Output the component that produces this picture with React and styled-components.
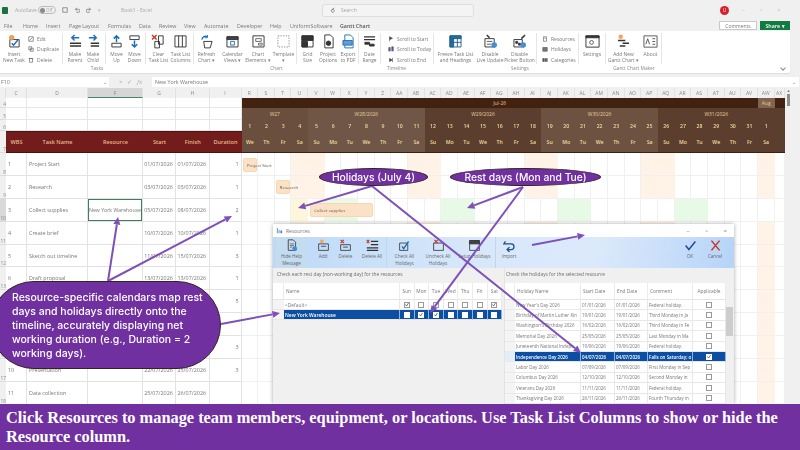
import React from "react";
import styled, { createGlobalStyle } from "styled-components";

const Global = createGlobalStyle`
  html, body { margin: 0; padding: 0; background: #f0f0f0; }
  * { box-sizing: border-box; }
`;

const Page = styled.div`
  position: relative;
  width: 800px;
  height: 450px;
  overflow: hidden;
  display: flex;
  flex-direction: column;
  background: #f0f0f0;
  font-family: "Open Sans", "Liberation Sans", sans-serif;
  color: #555;
`;
const Soft = styled.div`
  flex: 1;
  min-height: 0;
  display: flex;
  flex-direction: column;
  filter: blur(0.4px);
`;

/* ---------- title bar ---------- */
const TitleBar = styled.div`
  height: 20px;
  display: flex;
  align-items: center;
  padding: 0 0 0 2px;
  font-size: 5px;
  color: #a8a8a8;
`;
const Logo = styled.div`
  width: 6px;
  height: 7px;
  border-radius: 1px;
  background: #1d6f42;
  margin-right: 7px;
`;
const TitleText = styled.span`
  width: ${(p) => p.$w}px;
  flex: none;
  white-space: nowrap;
`;
const Toggle = styled.div`
  width: 18px;
  height: 8px;
  margin: 0 6px 0 2px;
  border: 1px solid #bbb;
  border-radius: 4px;
  display: flex;
  align-items: center;
  gap: 1px;
  padding: 0 1px;
  font-size: 4.4px;
  &::before { content: ""; width: 5px; height: 5px; border-radius: 50%; background: #8a8a8a; }
`;
const QuickIcons = styled.div`
  display: flex;
  gap: 6px;
  align-items: center;
  width: 59px;
  color: #bbb;
`;
const SearchBox = styled.div`
  width: 152px;
  height: 13px;
  margin-left: 168px;
  border: 1px solid #dedede;
  border-radius: 2px;
  background: #f4f4f4;
  display: flex;
  align-items: center;
  gap: 6px;
  padding-left: 6px;
`;
const Avatar = styled.div`
  width: 9px;
  height: 9px;
  margin-left: 246px;
  border-radius: 50%;
  background: #d9202a;
  color: #fff;
  font-size: 4.5px;
  display: flex;
  align-items: center;
  justify-content: center;
`;
const WinControls = styled.div`
  display: flex;
  gap: 15px;
  margin-left: 13px;
  font-size: 6px;
  color: #bfbfbf;
  line-height: 1;
`;

/* ---------- tabs ---------- */
const TabBar = styled.div`
  height: 11px;
  display: flex;
  align-items: center;
  padding-left: 4px;
  font-size: 5.3px;
  color: #777;
`;
const Tab = styled.span`
  width: ${(p) => p.$w}px;
  flex: none;
  white-space: nowrap;
  ${(p) => p.$active && "font-weight: 600; color: #555;"}
`;
const TabRight = styled.div`
  margin-left: auto;
  margin-right: 10px;
  display: flex;
  gap: 3px;
`;
const CommentBtn = styled.div`
  width: 38px;
  height: 9px;
  border: 1px solid #c9c9c9;
  background: #fff;
  display: flex;
  align-items: center;
  justify-content: center;
  font-size: 5px;
`;
const ShareBtn = styled.div`
  width: 30px;
  height: 9px;
  background: #107c41;
  color: #fff;
  display: flex;
  align-items: center;
  justify-content: center;
  font-size: 5.3px;
  font-weight: 600;
`;

/* ---------- ribbon ---------- */
const Ribbon = styled.div`
  height: 42px;
  width: 790px;
  background: #fff;
  border-radius: 0 2px 2px 0;
  box-shadow: 0 1px 1px #ddd;
  margin-bottom: 4px;
  display: flex;
  position: relative;
`;
const Group = styled.div`
  width: ${(p) => p.$w}px;
  display: flex;
  flex-direction: column;
`;
const GroupBody = styled.div`
  height: 33px;
  display: flex;
`;
const GroupLabel = styled.div`
  height: 9px;
  text-align: center;
  font-size: 4.8px;
  line-height: 8px;
  color: #888;
`;
const Section = styled.div`
  width: ${(p) => p.$w}px;
  display: flex;
  justify-content: center;
  border-right: 1px solid #e6e6e6;
  margin-top: 2px;
`;
const Big = styled.div`
  width: ${(p) => p.$w}px;
  flex: none;
  display: flex;
  flex-direction: column;
  align-items: center;
  padding-top: 1px;
  font-size: 4.9px;
  line-height: 6.6px;
  text-align: center;
  white-space: nowrap;
  color: #777;
  svg { display: block; margin-bottom: 2px; }
`;
const SmallCol = styled.div`
  width: ${(p) => p.$w}px;
  display: flex;
  flex-direction: column;
  padding: 1px 0 0 ${(p) => p.$pad}px;
  gap: 1.5px;
`;
const Small = styled.div`
  height: 9.5px;
  display: flex;
  align-items: center;
  gap: 3px;
  font-size: 5px;
  white-space: nowrap;
  color: #777;
`;
const RibbonChevron = styled.div`
  position: absolute;
  right: 5px;
  bottom: 3px;
  width: 4px;
  height: 4px;
  transform: rotate(45deg);
  border: solid #888;
  border-width: 0 1px 1px 0;
`;

/* ---------- formula bar ---------- */
const FormulaBar = styled.div`
  height: 10px;
  margin-bottom: 1px;
  display: flex;
  font-size: 5.3px;
  color: #777;
`;
const NameBox = styled.div`
  width: 109px;
  background: #fff;
  display: flex;
  align-items: center;
  justify-content: space-between;
  padding: 0 2px 0 1px;
`;
const FormulaTools = styled.div`
  width: 43px;
  display: flex;
  align-items: center;
  justify-content: center;
  gap: 5px;
  color: #aaa;
  font-size: 6px;
`;
const FormulaInput = styled.div`
  flex: 1;
  margin-right: 1px;
  background: #fff;
  display: flex;
  align-items: center;
  justify-content: space-between;
  padding: 0 3px;
`;

/* ---------- sheet ---------- */
const SheetWrap = styled.div`
  flex: 1;
  min-height: 0;
  display: flex;
  overflow: hidden;
  background: #fff;
`;
const Grid = styled.div`
  width: 785px;
  display: grid;
  grid-template-columns: 6px 21px 61px 55px 33px 33.5px 32px repeat(32, 16.667px) 10px;
  grid-template-rows: 10px 10px 12px 11px 22px repeat(11, 22.9px);
  font-size: 5.4px;
  color: #777;
`;
const ColHead = styled.div`
  background: ${(p) => (p.$sel ? "#d6d6d6" : "#f0f0f0")};
  ${(p) => p.$sel && "border-bottom: 1px solid #3f8a63;"}
  display: flex;
  align-items: center;
  justify-content: center;
  font-size: 5px;
  color: #888;
  border-right: 1px solid #e2e2e2;
  overflow: hidden;
`;
const RowHead = styled.div`
  background: ${(p) => (p.$sel ? "#d9d9d9" : "#f0f0f0")};
  border-bottom: 1px solid #dcdcdc;
  display: flex;
  align-items: flex-end;
  justify-content: flex-end;
  overflow: hidden;
  font-size: 4.8px;
  color: #888;
  white-space: nowrap;
`;
const Blank = styled.div`
  border-right: 1px solid #e6e6e6;
  border-bottom: 1px solid #e6e6e6;
`;
const HeaderCell = styled.div`
  background: #721c1c;
  color: #e4b98a;
  font-weight: 600;
  font-size: 5.6px;
  display: flex;
  align-items: center;
  justify-content: center;
  border-top: 1px solid #4c1212;
  border-bottom: 1px solid #4c1212;
`;
const Month = styled.div`
  grid-column: span ${(p) => p.$span};
  background: ${(p) => (p.$light ? "#806450" : "#41210f")};
  color: #e8c794;
  font-size: 5px;
  display: flex;
  align-items: center;
  justify-content: center;
`;
const Week = styled.div`
  grid-column: span ${(p) => p.$span};
  background: ${(p) => p.$bg};
  color: #e8cf9e;
  font-size: 5px;
  display: flex;
  align-items: center;
  justify-content: center;
`;
const DayCell = styled.div`
  background: ${(p) => p.$bg};
  color: #eedca0;
  font-size: 5.2px;
  font-weight: 600;
  display: flex;
  align-items: center;
  justify-content: center;
  ${(p) => p.$low && "border-bottom: 1px solid #3a2113;"}
`;
const Cell = styled.div`
  position: relative;
  border-right: 1px solid #e2e2e2;
  border-bottom: 1px solid #e2e2e2;
  display: flex;
  align-items: center;
  justify-content: ${(p) => p.$align || "flex-start"};
  padding: 0 ${(p) => (p.$align === "flex-end" ? "2px" : "1px")} 0 ${(p) => (p.$align === "center" ? "0" : "2px")};
  white-space: nowrap;
  overflow: hidden;
  ${(p) => p.$active && "box-shadow: inset 0 0 0 1px #3f7d5f; padding-left: 1px; font-size: 5.2px;"}
`;
const TimeCell = styled.div`
  position: relative;
  background: ${(p) => p.$tint};
  border-right: 1px solid ${(p) => (p.$tint === "#fff" ? "#f0f0f0" : "transparent")};
  border-bottom: 1px solid #f0f0f0;
`;
const Bar = styled.div`
  position: absolute;
  z-index: 2;
  top: 4.5px;
  left: ${(p) => p.$left}px;
  width: ${(p) => p.$width}px;
  height: 14px;
  background: #fbe2c6;
  border: 1px solid #f7d6b0;
  border-radius: 2px;
  font-size: 4.3px;
  color: #66594c;
  white-space: nowrap;
  display: flex;
  align-items: center;
  padding-left: 3px;
`;
const Scrollbar = styled.div`
  width: 15px;
  background: #f0f0f0;
  display: flex;
  flex-direction: column;
  align-items: center;
  font-size: 4px;
  color: #777;
  padding-right: 8px;
  &::after { content: ""; width: 3px; height: 12px; background: #8d8d8d; margin-top: 1px; }
`;

/* ---------- caption ---------- */
const Caption = styled.div`
  height: 46px;
  flex: none;
  background: #7030a0;
  color: #fff;
  font-family: "Liberation Serif", serif;
  font-weight: 700;
  font-size: 16.35px;
  line-height: 19px;
  padding: 4px 6px 0;
  position: relative;
  z-index: 5;
`;

/* ---------- dialog ---------- */
const Dialog = styled.div`
  position: absolute;
  left: 273px;
  top: 224px;
  width: 461px;
  height: 180px;
  z-index: 3;
  background: #f0f0f0;
  box-shadow: 0 0 4px rgba(0, 0, 0, 0.35);
  display: flex;
  flex-direction: column;
  overflow: hidden;
  filter: blur(0.4px);
`;
const DialogTitle = styled.div`
  height: 13px;
  flex: none;
  background: #fff;
  display: flex;
  align-items: center;
  gap: 3px;
  padding: 0 7px 0 3px;
  font-size: 5px;
  color: #777;
`;
const DialogWin = styled.div`
  margin-left: auto;
  display: flex;
  gap: 16px;
  font-size: 6px;
  color: #777;
`;
const ToolBar = styled.div`
  height: 31px;
  flex: none;
  background: linear-gradient(100deg, #bcd9f8 0%, #d8e8fa 45%, #dbe9fb 70%, #b6d4f8 100%);
  display: flex;
  padding-left: 3px;
`;
const ToolBtn = styled.div`
  width: ${(p) => p.$w}px;
  flex: none;
  display: flex;
  flex-direction: column;
  align-items: center;
  padding-top: 2px;
  font-size: 4.6px;
  line-height: 6.6px;
  text-align: center;
  white-space: nowrap;
  color: #666;
  ${(p) => p.$on && "background: #c4dcf0;"}
  ${(p) => p.$sep && "border-right: 1px solid #c2d6ea;"}
  ${(p) => p.$ml && `margin-left: ${p.$ml}px;`}
  svg { display: block; margin-bottom: 1px; }
`;
const Panes = styled.div`
  flex: 1;
  display: flex;
  min-height: 0;
`;
const Pane = styled.div`
  width: ${(p) => p.$w}px;
  flex: none;
  padding-top: 2px;
  ${(p) => p.$edge && "border-left: 1px solid #e4e4e4;"}
`;
const PaneLabel = styled.div`
  height: 13px;
  padding-left: ${(p) => p.$pad}px;
  font-size: 4.8px;
  line-height: 9px;
  color: #6b6b6b;
`;
const Table = styled.div`
  display: grid;
  grid-template-columns: ${(p) => p.$cols};
  grid-template-rows: 17px;
  grid-auto-rows: ${(p) => p.$row}px;
  font-size: ${(p) => p.$size}px;
  color: #777;
`;
const THead = styled.div`
  background: #fff;
  display: flex;
  align-items: center;
  justify-content: ${(p) => (p.$center ? "center" : "flex-start")};
  padding-left: ${(p) => (p.$center ? 0 : 2)}px;
  border-right: 1px solid #ececec;
  border-bottom: 1px solid #e5e5e5;
  color: #777;
  font-size: 4.8px;
`;
const TCell = styled.div`
  background: ${(p) => (p.$sel ? "#0b4ea2" : "#fff")};
  color: ${(p) => (p.$sel ? "#fff" : "#777")};
  ${(p) => p.$sel && "font-weight: 600;"}
  border-right: 1px solid ${(p) => (p.$sel ? "#8eb3de" : "#e8e8e8")};
  border-bottom: 1px solid #e8e8e8;
  display: flex;
  align-items: center;
  justify-content: ${(p) => (p.$center ? "center" : "flex-start")};
  padding-left: ${(p) => (p.$center ? 0 : 1)}px;
  white-space: nowrap;
  overflow: hidden;
`;
const Gutter = styled.div`
  background: ${(p) => (p.$sel ? "#e4eef8" : "#f4f4f4")};
  border-bottom: 1px solid #e8e8e8;
`;
const Box = styled.div`
  width: 6px;
  height: 6px;
  background: #fff;
  border: 0.6px solid ${(p) => (p.$strong ? "#fff" : "#9a9a9a")};
  display: flex;
  align-items: center;
  justify-content: center;
`;
const RightWrap = styled.div`
  display: flex;
`;
const VScroll = styled.div`
  width: 7px;
  height: 121px;
  background: #f0f0f0;
  display: flex;
  flex-direction: column;
  &::before { content: ""; height: 7px; margin-top: 17px; }
  &::after { content: ""; height: 29px; margin-top: 0; background: #cdcdcd; }
`;

/* ---------- callouts ---------- */
const Ellipse = styled.div`
  position: absolute;
  z-index: 4;
  left: ${(p) => p.$x}px;
  top: ${(p) => p.$y}px;
  width: ${(p) => p.$w}px;
  height: 18px;
  border-radius: 50%;
  background: #7030a0;
  border: 1px solid #33241c;
  color: #fff;
  font-family: Inter, "Open Sans", sans-serif;
  font-weight: 500;
  font-size: 10.3px;
  display: flex;
  align-items: center;
  justify-content: center;
  white-space: nowrap;
`;
const Pill = styled.div`
  position: absolute;
  z-index: 4;
  left: -10px;
  top: 281px;
  width: 231px;
  height: 88px;
  border-radius: 44px;
  background: #7030a0;
  border: 1px solid #33241c;
  color: #fff;
  font-family: Inter, "Open Sans", sans-serif;
  font-weight: 500;
  font-size: 10.5px;
  line-height: 14px;
  padding: 9px 4px 0 21px;
`;
const Arrows = styled.svg`
  position: absolute;
  z-index: 4;
  left: 0;
  top: 0;
  pointer-events: none;
`;

/* ---------- icons ---------- */
const Ic = ({ s = 15, children }) => (
  <svg width={s} height={s} viewBox="0 0 16 16" fill="none" stroke="#333" strokeWidth="1">
    {children}
  </svg>
);
const Blue = "#1f6fb8";
const icons = {
  insert: <><path d="M3 6h10v8H3z" /><path d="M5 10l2 2 5-6" stroke={Blue} strokeWidth="1.6" /><circle cx="5" cy="4" r="2.4" fill="#f2a65a" stroke="#e58a35" /></>,
  parent: <><path d="M12 4H4m3-3L4 4l3 3" stroke={Blue} strokeWidth="1.6" /><path d="M2 10h12M2 13h12" strokeWidth="1.5" /></>,
  child: <><path d="M3 4h8M8 1l3 3-3 3" stroke={Blue} strokeWidth="1.6" /><path d="M5 10h9M5 13h9" strokeWidth="1.5" /></>,
  up: <><path d="M8 9V2M5 5l3-3 3 3" stroke={Blue} strokeWidth="1.6" /><path d="M3 10h10v4H3z" /></>,
  down: <><path d="M3 2h10v4H3z" /><path d="M8 7v7m-3-3l3 3 3-3" stroke={Blue} strokeWidth="1.6" /></>,
  clear: <><path d="M1 1l5 5M6 1L1 6" stroke="#c8382e" strokeWidth="1.6" /><path d="M8 2h5v9H8zM4 8h5v7H4z" /></>,
  columns: <><path d="M2 2h12v12H2zM6 2v12M10 2v12" /></>,
  refresh: <><path d="M3 6a4 4 0 0 1 6-3" stroke={Blue} strokeWidth="1.4" /><path d="M9 1v3H6" stroke={Blue} /><path d="M5 8h9l-2 7H6z" /></>,
  calendar: <><path d="M2 3h12v11H2z" /><path d="M2 3h12v3H2z" fill="#444" /><path d="M6 8h4v4H6z" stroke={Blue} /></>,
  elements: <><path d="M2 2h12v12H2z" /><path d="M5 5h6v3H5zM8 10h4v2H8z" stroke="#666" /></>,
  template: <path d="M2 2h12v12H2z" stroke="#888" strokeDasharray="1.4 1.4" />,
  grid: <><path d="M2 2h12v12H2z" /><path d="M2 8h6v6H2z" fill="#333" /><path d="M2 2h12v5H2z" fill="#333" /></>,
  options: <><path d="M4 1h6l3 3v11H4z" /><circle cx="8" cy="10" r="2.4" fill="#333" /></>,
  pdf: <><path d="M4 1h6l3 3v11H4z" stroke={Blue} /><path d="M2 7h10v5H2z" fill="#5f9dd6" stroke={Blue} /></>,
  range: <><path d="M2 3h12M2 6h12" strokeWidth="1.4" /><path d="M3 9h5v2H3zM8 11h5v2H8z" fill="#333" /></>,
  freeze: <><path d="M2 2h12v12H2z" fill="#fff" stroke="#1f5f8f" /><path d="M2 2h12v3H2zM2 5h4v9H2z" fill="#1f6f9f" stroke="#1f5f8f" /><path d="M10 5v9M2 9h12" stroke="#1f5f8f" /></>,
  live: <><path d="M2 5h10v9H2z" /><path d="M4 8h6M4 11h5" stroke="#555" /><path d="M4 1l3 3" strokeWidth="1.6" /><circle cx="12" cy="12" r="3" fill="#3f8fd6" stroke="none" /></>,
  picker: <><path d="M2 6h9v8H2z" /><path d="M4 8h2v2H4zM7 10h2v2H7z" fill="#333" /><path d="M10 5l4-4" strokeWidth="1.6" /><circle cx="12" cy="12" r="3" fill="#3f8fd6" stroke="none" /></>,
  settings: <><path d="M1 2h14v12H1z" /><path d="M1 2h14v2H1z" fill="#333" /><circle cx="7" cy="9" r="2" stroke="#555" /></>,
  addnew: <><circle cx="5" cy="3" r="2.4" fill="#f2a65a" stroke="none" /><path d="M2 7h8M7 10h7M4 13h6" strokeWidth="1.6" /></>,
  about: <><path d="M1 2h14v12H1z" stroke="#555" /><path d="M3 11l2-6 2 6M10 5h3M10 8h3M10 11h3" stroke="#555" /></>,
  help: <><path d="M4 1h6l3 3v10H4z" /><path d="M6 6h5M6 8h5M6 10h3" stroke="#666" /><circle cx="12" cy="12" r="3" fill="#3f8fd6" stroke="none" /></>,
  add: <><path d="M2 6h12v8H2z" /><path d="M5 9h6" /><circle cx="6" cy="3" r="2.3" fill="#f2a65a" stroke="none" /></>,
  del: <><path d="M2 7h12v7H2z" /><path d="M5 10h6" /><path d="M2 1l4 4M6 1L2 5" stroke="#c8382e" strokeWidth="1.5" /></>,
  delall: <><path d="M6 3h9M6 7h9M1 11h14M1 14h14" strokeWidth="1.4" /><path d="M1 1l3 4M4 1L1 5" stroke="#c8382e" strokeWidth="1.4" /></>,
  checkall: <><path d="M2 5h10v9H2z" /><path d="M5 9l2 3 6-9" stroke={Blue} strokeWidth="1.7" /></>,
  uncheck: <><path d="M2 5h12v9H2z" /><path d="M3 1l4 4M7 1L3 5" stroke="#c8382e" strokeWidth="1.5" /></>,
  setup: <><path d="M2 2h12v12H2z" /><path d="M2 2h12v4H2z" fill="#444" /></>,
  import: <path d="M3 3L1 6l2 0M1.5 6H10a3.5 3.5 0 0 1 0 7H6M8 10l-3 3 3 3" stroke="#1f4f8f" strokeWidth="1.6" />,
  ok: <path d="M2 8l4 5 8-10" stroke="#1f4f8f" strokeWidth="1.8" />,
  cancel: <path d="M3 2l10 12M13 2L3 14" stroke="#c8382e" strokeWidth="1.9" />,
};
const I = ({ n, s }) => <Ic s={s}>{icons[n]}</Ic>;
const SI = ({ d, f }) => (
  <svg width="6" height="6" viewBox="0 0 8 8" fill={f || "none"} stroke="#555" strokeWidth="0.8"><path d={d} /></svg>
);

/* ---------- data ---------- */
const tabs = [
  ["File", 19], ["Home", 23], ["Insert", 23], ["Page Layout", 39], ["Formulas", 31], ["Data", 20], ["Review", 25],
  ["View", 20], ["Automate", 33], ["Developer", 33], ["Help", 20], ["UniformSoftware", 50], ["Gantt Chart", 40],
];
const colNames = ["R","S","T","U","V","W","X","Y","Z","AA","AB","AC","AD","AE","AF","AG","AH","AI","AJ","AK","AL","AM","AN","AO","AP","AQ","AR","AS","AT","AU","AV","AW","AX"];
const dow = ["Su","Mo","Tu","We","Th","Fr","Sa"];
const dayList = Array.from({ length: 32 }, (_, i) => ({
  num: i < 31 ? i + 1 : 1,
  name: dow[(i + 3) % 7],
  idx: i,
}));
const weekOf = (i) => (i < 4 ? 0 : 1 + Math.floor((i - 4) / 7));
const weekBg = ["#6a4e3e", "#6f5647", "#5b3e2d", "#6d5242", "#5b3e2d"];
const weeks = [["W27", 4], ["W28/2026", 7], ["W29/2026", 7], ["W30/2026", 7], ["W31/2026", 7]];
const tasks = [
  ["Project Start", "", "01/07/2026", "01/07/2026", "1"],
  ["Research", "", "03/07/2026", "03/07/2026", "1"],
  ["Collect supplies", "New York Warehouse", "05/07/2026", "08/07/2026", "2"],
  ["Create brief", "", "10/07/2026", "10/07/2026", "1"],
  ["Sketch out timeline", "", "11/07/2026", "15/07/2026", "3"],
  ["Draft proposal", "", "13/07/2026", "13/07/2026", "1"],
  ["", "", "", "", "5"],
  ["", "", "", "", ""],
  ["", "", "", "", "3"],
  ["Presentation", "", "22/07/2026", "25/07/2026", "3"],
  ["Data collection", "", "25/07/2026", "26/07/2026", ""],
];
const bars = {
  0: { idx: 0, left: 1.5, width: 14, label: "Project Start" },
  1: { idx: 2, left: 1, width: 14, label: "Research" },
  2: { idx: 4, left: 2, width: 63, label: "Collect supplies" },
};
const tintFor = (row, i) => {
  const wd = (i + 3) % 7;
  if (row === 2) {
    if (i === 3) return "#fef6da";
    if (wd === 1 || wd === 2) return "#e6fae6";
    return "#fff";
  }
  return wd === 0 || wd === 6 ? "#fff3e8" : "#fff";
};
const holidays = [
  ["New Year's Day 2026", "01/01/2026", "Federal holiday."],
  ["Birthday of Martin Luther Kin", "19/01/2026", "Third Monday in Ja"],
  ["Washington's Birthday 2026", "16/02/2026", "Third Monday in Fe"],
  ["Memorial Day 2026", "25/05/2026", "Last Monday in Ma"],
  ["Juneteenth National Indepe", "19/06/2026", "Federal holiday."],
  ["Independence Day 2026", "04/07/2026", "Falls on Saturday; o"],
  ["Labor Day 2026", "07/09/2026", "First Monday in Sep"],
  ["Columbus Day 2026", "12/10/2026", "Second Monday in"],
  ["Veterans Day 2026", "11/11/2026", "Federal holiday."],
  ["Thanksgiving Day 2026", "26/11/2026", "Fourth Thursday in"],
];
const weekdaysShort = ["Sun", "Mon", "Tue", "Wed", "Thu", "Fri", "Sat"];

const Tick = () => (
  <svg width="5" height="5" viewBox="0 0 8 8" fill="none" stroke="#333" strokeWidth="1.3"><path d="M1 4l2 3 4-6" /></svg>
);
const Check = ({ on, strong }) => <Box $strong={strong}>{on && <Tick />}</Box>;

function Arrow({ x1, y1, x2, y2 }) {
  const a = Math.atan2(y2 - y1, x2 - x1);
  const h = 7.5, w = 3.5;
  const bx = x2 - h * Math.cos(a), by = y2 - h * Math.sin(a);
  const px = -Math.sin(a) * w, py = Math.cos(a) * w;
  return (
    <g>
      <line x1={x1} y1={y1} x2={bx} y2={by} stroke="#7f50b8" strokeWidth="2" />
      <polygon points={`${x2},${y2} ${bx + px},${by + py} ${bx - px},${by - py}`} fill="#7f50b8" />
    </g>
  );
}

export default function App() {
  return (
    <Page>
      <Global />
      <Soft>
        <TitleBar>
          <Logo />
          <TitleText $w={21}>AutoSave</TitleText>
          <Toggle>Off</Toggle>
          <QuickIcons>
            <SI d="M1 1h6v6H1z" />
            <SI d="M2 3h4a2 2 0 0 1 0 4H3M2 3l2-2M2 3l2 2" />
            <SI d="M6 3H2a2 2 0 0 0 0 4h3M6 3L4 1M6 3L4 5" />
            <span>▾</span>
          </QuickIcons>
          <TitleText $w={33}>Book1 - Excel</TitleText>
          <SearchBox>
            <SI d="M3 5a2 2 0 1 0 0-.1M4 4l3-3" />
            <span>Search</span>
          </SearchBox>
          <Avatar>U</Avatar>
          <WinControls><span>–</span><span>▫</span><span>×</span></WinControls>
        </TitleBar>
        <TabBar>
          {tabs.map(([t, w]) => (
            <Tab key={t} $w={w} $active={t === "Gantt Chart"}>{t}</Tab>
          ))}
          <TabRight>
            <CommentBtn>Comments</CommentBtn>
            <ShareBtn>Share ▾</ShareBtn>
          </TabRight>
        </TabBar>
        <Ribbon>
          <Group $w={194}>
            <GroupBody>
              <Section $w={63}>
                <Big $w={28}><I n="insert" />Insert<br />New Task</Big>
                <SmallCol $w={35} $pad={0}>
                  <Small><SI d="M1 1h6v6H1zM2 6l4-4" />Edit</Small>
                  <Small><SI d="M1 1h4v4H1zM3 3h4v4H3z" />Duplicate</Small>
                  <Small><SI d="M2 2h4v5H2zM1 2h6" />Delete</Small>
                </SmallCol>
              </Section>
              <Section $w={43}>
                <Big $w={18}><I n="parent" />Make<br />Parent</Big>
                <Big $w={18}><I n="child" />Make<br />Child</Big>
              </Section>
              <Section $w={40}>
                <Big $w={18}><I n="up" />Move<br />Up</Big>
                <Big $w={18}><I n="down" />Move<br />Down</Big>
              </Section>
              <Section $w={48}>
                <Big $w={22}><I n="clear" />Clear<br />Task List</Big>
                <Big $w={22}><I n="columns" />Task List<br />Columns</Big>
              </Section>
            </GroupBody>
            <GroupLabel>Tasks</GroupLabel>
          </Group>
          <Group $w={165}>
            <GroupBody>
              <Section $w={103}>
                <Big $w={26}><I n="refresh" />Refresh<br />Chart ▾</Big>
                <Big $w={26}><I n="calendar" />Calendar<br />Views ▾</Big>
                <Big $w={25}><I n="elements" />Chart<br />Elements ▾</Big>
                <Big $w={26}><I n="template" />Template<br />▾</Big>
              </Section>
              <Section $w={62}>
                <Big $w={22}><I n="grid" />Grid<br />Size</Big>
                <Big $w={19}><I n="options" />Project<br />Options</Big>
                <Big $w={21}><I n="pdf" />Export<br />to PDF</Big>
              </Section>
            </GroupBody>
            <GroupLabel>Chart</GroupLabel>
          </Group>
          <Group $w={75}>
            <GroupBody>
              <Section $w={22}>
                <Big $w={22}><I n="range" />Date<br />Range</Big>
              </Section>
              <Section $w={53}>
                <SmallCol $w={53} $pad={7}>
                  <Small><SI d="M2 1v6M2 1l4 2-4 2" f="#333" />Scroll to Start</Small>
                  <Small><SI d="M1 7V2h2v5M5 7V1h2v6" f="#6a4fa8" />Scroll to Today</Small>
                  <Small><SI d="M6 1v6M6 4L2 2v4z" f="#333" />Scroll to End</Small>
                </SmallCol>
              </Section>
            </GroupBody>
            <GroupLabel>Timeline</GroupLabel>
          </Group>
          <Group $w={172}>
            <GroupBody>
              <Section $w={103}>
                <Big $w={42}><I n="freeze" />Freeze Task List<br />and Headings</Big>
                <Big $w={27}><I n="live" />Disable<br />Live Update</Big>
                <Big $w={32}><I n="picker" />Disable<br />Picker Button</Big>
              </Section>
              <Section $w={42}>
                <SmallCol $w={42} $pad={5}>
                  <Small><SI d="M2 1h4v6H2zM3 3h2" />Resources</Small>
                  <Small><SI d="M1 2h6v5H1z" f="#777" />Holidays</Small>
                  <Small><SI d="M1 2h2v4H1zM4 2h1v4H4zM6 2h1v4H6z" f="#555" />Categories</Small>
                </SmallCol>
              </Section>
              <Section $w={27}>
                <Big $w={27}><I n="settings" />Settings</Big>
              </Section>
            </GroupBody>
            <GroupLabel>Settings</GroupLabel>
          </Group>
          <Group $w={56}>
            <GroupBody>
              <Section $w={56}>
                <Big $w={34}><I n="addnew" />Add New<br />Gantt Chart ▾</Big>
                <Big $w={20}><I n="about" />About</Big>
              </Section>
            </GroupBody>
            <GroupLabel>Gantt Chart Maker</GroupLabel>
          </Group>
          <RibbonChevron />
        </Ribbon>
        <FormulaBar>
          <NameBox><span>F10</span><span>⌄</span></NameBox>
          <FormulaTools><span>×</span><span>✓</span><i>fx</i></FormulaTools>
          <FormulaInput><span>New York Warehouse</span><span>⌄</span></FormulaInput>
        </FormulaBar>
        <SheetWrap>
          <Grid>
            <ColHead />
            {["C", "D", "F", "G", "H", "I"].map((c) => (
              <ColHead key={c} $sel={c === "F"}>{c}</ColHead>
            ))}
            {colNames.map((c) => <ColHead key={c}>{c}</ColHead>)}

            <RowHead>4</RowHead>
            {[0, 1, 2, 3, 4, 5].map((i) => <Blank key={i} />)}
            <Month $span={31}>Jul-26</Month>
            <Month $span={1} $light>Aug</Month>
            <Month $span={1} />

            <RowHead>5</RowHead>
            {[0, 1, 2, 3, 4, 5].map((i) => <Blank key={i} />)}
            {weeks.map(([w, span], i) => <Week key={w} $span={span} $bg={weekBg[i]}>{w}</Week>)}
            <Week $span={1} $bg="#5b3e2d" />

            <RowHead>6</RowHead>
            {[0, 1, 2, 3, 4, 5].map((i) => <Blank key={i} />)}
            {dayList.map((d) => <DayCell key={d.idx} $bg={weekBg[weekOf(d.idx)]}>{d.num}</DayCell>)}
            <DayCell $bg="#5b3e2d" />

            <RowHead>7</RowHead>
            {["WBS", "Task Name", "Resource", "Start", "Finish", "Duration"].map((h) => (
              <HeaderCell key={h}>{h}</HeaderCell>
            ))}
            {dayList.map((d) => <DayCell key={d.idx} $low $bg={weekBg[weekOf(d.idx)]}>{d.name}</DayCell>)}
            <DayCell $low $bg="#5b3e2d" />

            {tasks.map((t, r) => (
              <React.Fragment key={r}>
                <RowHead $sel={r === 2}>{r + 8}</RowHead>
                <Cell>{r + 1}</Cell>
                <Cell>{t[0]}</Cell>
                <Cell $active={r === 2}>{t[1]}</Cell>
                <Cell $align="center">{t[2]}</Cell>
                <Cell $align="center">{t[3]}</Cell>
                <Cell $align="flex-end">{t[4]}</Cell>
                {dayList.map((d) => (
                  <TimeCell key={d.idx} $tint={tintFor(r, d.idx)}>
                    {bars[r] && bars[r].idx === d.idx && (
                      <Bar $left={bars[r].left} $width={bars[r].width}>{bars[r].label}</Bar>
                    )}
                  </TimeCell>
                ))}
                <TimeCell $tint="#fff" />
              </React.Fragment>
            ))}
          </Grid>
          <Scrollbar>▲</Scrollbar>
        </SheetWrap>
      </Soft>
      <Caption>
        Click Resources to manage team members, equipment, or locations. Use Task List Columns to show or hide the Resource column.
      </Caption>

      <Dialog>
        <DialogTitle>
          <svg width="7" height="7" viewBox="0 0 8 8"><path d="M1 1h1v6H1zM3 3h1v4H3zM5 4h2v3H5z" fill="#4a86c5" /></svg>
          Resources
          <DialogWin><span>–</span><span>▫</span><span>×</span></DialogWin>
        </DialogTitle>
        <ToolBar>
          <ToolBtn $w={31} $on><I n="help" s={13} />Hide Help<br />Message</ToolBtn>
          <ToolBtn $w={16} $ml={8}><I n="add" s={13} />Add</ToolBtn>
          <ToolBtn $w={25} $ml={2}><I n="del" s={13} />Delete</ToolBtn>
          <ToolBtn $w={29} $sep><I n="delall" s={13} />Delete All</ToolBtn>
          <ToolBtn $w={35}><I n="checkall" s={13} />Check All<br />Holidays</ToolBtn>
          <ToolBtn $w={32}><I n="uncheck" s={13} />Uncheck All<br />Holidays</ToolBtn>
          <ToolBtn $w={41}><I n="setup" s={13} />Setup Holidays</ToolBtn>
          <ToolBtn $w={1} $sep />
          <ToolBtn $w={26}><I n="import" s={13} />Import</ToolBtn>
          <ToolBtn $w={24} $ml={156}><I n="ok" s={13} />OK</ToolBtn>
          <ToolBtn $w={26}><I n="cancel" s={13} />Cancel</ToolBtn>
        </ToolBar>
        <Panes>
          <Pane $w={231}>
            <PaneLabel $pad={4}>Check each rest day (non-working day) for the resources</PaneLabel>
            <Table $cols="11px 116px repeat(7, 14.6px)" $row={10} $size={4.9}>
              <THead />
              <THead>Name</THead>
              {weekdaysShort.map((d) => <THead key={d} $center>{d}</THead>)}
              <Gutter />
              <TCell>&lt;Default&gt;</TCell>
              {weekdaysShort.map((d, i) => (
                <TCell key={d} $center><Check on={i === 0 || i === 6} /></TCell>
              ))}
              <Gutter />
              <TCell $sel>New York Warehouse</TCell>
              {weekdaysShort.map((d, i) => (
                <TCell key={d} $center $sel><Check on={i === 1 || i === 2} strong /></TCell>
              ))}
            </Table>
          </Pane>
          <Pane $w={230} $edge>
            <PaneLabel $pad={1}>Check the holidays for the selected resource</PaneLabel>
            <RightWrap>
              <Table $cols="10px 66px 34px 33px 45px 33px" $row={10.4} $size={4.5}>
                <THead />
                <THead>Holiday Name</THead>
                <THead>Start Date</THead>
                <THead>End Date</THead>
                <THead>Comment</THead>
                <THead $center>Applicable</THead>
                {holidays.map((h, i) => (
                  <React.Fragment key={h[0]}>
                    <Gutter $sel={i === 5} />
                    <TCell $sel={i === 5}>{h[0]}</TCell>
                    <TCell $sel={i === 5}>{h[1]}</TCell>
                    <TCell $sel={i === 5}>{h[1]}</TCell>
                    <TCell $sel={i === 5}>{h[2]}</TCell>
                    <TCell $sel={i === 5} $center><Check on={i === 5} strong={i === 5} /></TCell>
                  </React.Fragment>
                ))}
              </Table>
              <VScroll />
            </RightWrap>
          </Pane>
        </Panes>
      </Dialog>

      <Arrows width="800" height="450" viewBox="0 0 800 450">
        <Arrow x1={372} y1={186} x2={298} y2={208} />
        <Arrow x1={372} y1={186} x2={581} y2={353} />
        <Arrow x1={523} y1={187} x2={467} y2={208} />
        <Arrow x1={523} y1={187} x2={430} y2={313} />
        <Arrow x1={108} y1={281} x2={118} y2={217} />
        <Arrow x1={108} y1={281} x2={232} y2={216} />
        <Arrow x1={221} y1={324} x2={280} y2={313} />
        <Arrow x1={532} y1={245} x2={585} y2={235} />
      </Arrows>
      <Ellipse $x={319} $y={168} $w={109}>Holidays (July 4)</Ellipse>
      <Ellipse $x={450} $y={168} $w={151}>Rest days (Mon and Tue)</Ellipse>
      <Pill>
        Resource-specific calendars map rest days and holidays directly onto the timeline, accurately displaying net working duration (e.g., Duration = 2 working days).
      </Pill>
    </Page>
  );
}
